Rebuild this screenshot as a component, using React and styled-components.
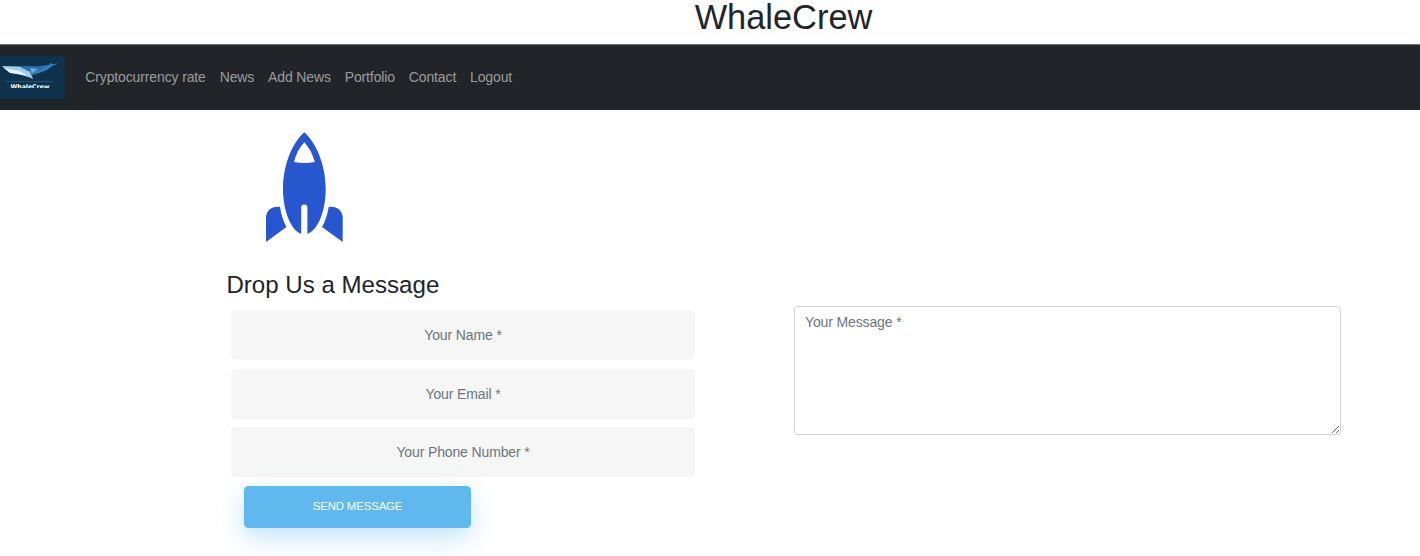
import React from "react";
import styled, { createGlobalStyle } from "styled-components";

const GlobalStyle = createGlobalStyle`
  *, *::before, *::after { box-sizing: border-box; }
  body {
    margin: 0;
    overflow: hidden;
    background: #fff;
    color: #212529;
    font: 14px/1.5 "Liberation Sans", Arial, sans-serif;
  }
`;

const Page = styled.div`
  height: 556px;
  overflow: hidden;
`;

const Title = styled.h1`
  height: 44px;
  margin: 0;
  padding-left: 147px;
  text-align: center;
  font-size: 34.4px;
  font-weight: 400;
  line-height: 34px;
`;

const Navbar = styled.nav`
  display: flex;
  align-items: center;
  height: 66px;
  border-top: 1px solid #6f7376;
  background: #212529;
`;

const Logo = styled.svg`
  display: block;
  width: 65px;
  height: 43px;
  margin-right: 20.3px;
`;

const NavLinks = styled.div`
  display: flex;
  gap: 13.9px;
  letter-spacing: -0.13px;
`;

const NavLink = styled.a`
  color: rgba(255, 255, 255, 0.55);
  white-space: nowrap;
`;

const Rocket = styled.svg`
  display: block;
  width: 78px;
  height: 110px;
  margin: 22px 0 0 265px;
`;

const Form = styled.form`
  display: flex;
  align-items: flex-start;
  margin: 27px 0 0 226px;
`;

const Fields = styled.div`
  width: 470px;
  margin-right: 98px;
`;

const Heading = styled.h3`
  margin: 0 0 9px;
  padding-left: 0.4px;
  font-size: 24.1px;
  font-weight: 400;
  line-height: 32px;
`;

const Input = styled.input`
  display: block;
  width: 464px;
  height: 50px;
  margin: 0 0 8.5px 5px;
  padding: 0 20px;
  border: 0;
  border-radius: 5px;
  background: #f6f6f6;
  color: #212529;
  font: inherit;
  letter-spacing: -0.13px;
  text-align: center;
  &::placeholder { color: #6c757d; opacity: 1; }
`;

const Message = styled.textarea`
  display: block;
  width: 547px;
  height: 129px;
  margin-top: 37px;
  padding: 5px 10px;
  border: 1px solid #ced4da;
  border-radius: 3.5px;
  background: #fff;
  color: #212529;
  font: inherit;
  letter-spacing: -0.13px;
  resize: both;
  &::placeholder { color: #6c757d; opacity: 1; }
`;

const SendButton = styled.button`
  display: block;
  width: 227px;
  height: 42.5px;
  margin-left: 18px;
  padding: 0 0 1px;
  border: 0;
  border-radius: 4.5px;
  background: #60b8ee;
  box-shadow: 0 9px 26px rgba(95, 186, 233, 0.4);
  color: #fff;
  font: 11.4px "Liberation Sans", Arial, sans-serif;
  letter-spacing: -0.13px;
  text-transform: uppercase;
`;

const links = ["Cryptocurrency rate", "News", "Add News", "Portfolio", "Contact", "Logout"];
const fields = ["Your Name *", "Your Email *", "Your Phone Number *"];

function WhaleLogo() {
  return (
    <Logo viewBox="0 0 65 43" aria-label="WhaleCrew">
      <rect width="64.5" height="43" fill="#10334d" />
      <path d="M2 10H21L39 10.5L49 9L50 7L53 8L59 7.5L53 9.5L47 14L39 17L32 19L33 23L26 19L20 19L11 17Z" fill="#347fb5" />
      <path d="M2 10L20 11L29 15L33 23L22 18L11 17L5 13Z" fill="#a3cce9" />
      <path d="M4 12L20 15L29 21L18 18L10 17Z" fill="#e5f1f8" />
      <path d="M19 10L39 10.5L46 11L38 15L28 15Z" fill="#2470ac" />
      <path d="M30 12L38 13L32 17Z" fill="#69afe0" />
      <path d="M6 25.5H52" stroke="#28618b" strokeWidth=".7" />
      <text x="10.5" y="32.5" fill="#fff" fontFamily="DejaVu Sans, sans-serif" fontSize="6.5" fontWeight="700" textLength="39" lengthAdjust="spacingAndGlyphs">WhaleCrew</text>
      <rect x="9" y="32" width="44" height="2" fill="#10334d" />
    </Logo>
  );
}

function RocketIcon() {
  return (
    <Rocket viewBox="0 0 78 110" fill="#2756ce" aria-hidden="true">
      <path fillRule="evenodd" d="M39.3 .3C28 10 18 32 18 57C18 79 26 98 36.2 102V75.5A3.1 3.1 0 0 1 42.4 75.5V102C53 98 60.7 79 60.7 57C60.7 32 50.5 10 39.3 .3ZM39.3 10.3C34 16 30.8 23 29 30Q39.3 32 49.8 30C48 23 44.5 16 39.3 10.3Z" />
      <path d="M15 74.8C16 83 18.5 89.5 21.5 95L1 110V84Q3 74 15 74.8Z" />
      <path d="M63.7 74.8C62.6 83 60 89.5 57 95L77.7 110V84Q75.5 74 63.7 74.8Z" />
    </Rocket>
  );
}

export default function App() {
  return (
    <Page>
      <GlobalStyle />
      <Title>WhaleCrew</Title>
      <Navbar>
        <WhaleLogo />
        <NavLinks>{links.map((link) => <NavLink key={link}>{link}</NavLink>)}</NavLinks>
      </Navbar>
      <RocketIcon />
      <Form>
        <Fields>
          <Heading>Drop Us a Message</Heading>
          {fields.map((field) => <Input key={field} placeholder={field} />)}
          <SendButton type="button">Send Message</SendButton>
        </Fields>
        <Message placeholder="Your Message *" />
      </Form>
    </Page>
  );
}
